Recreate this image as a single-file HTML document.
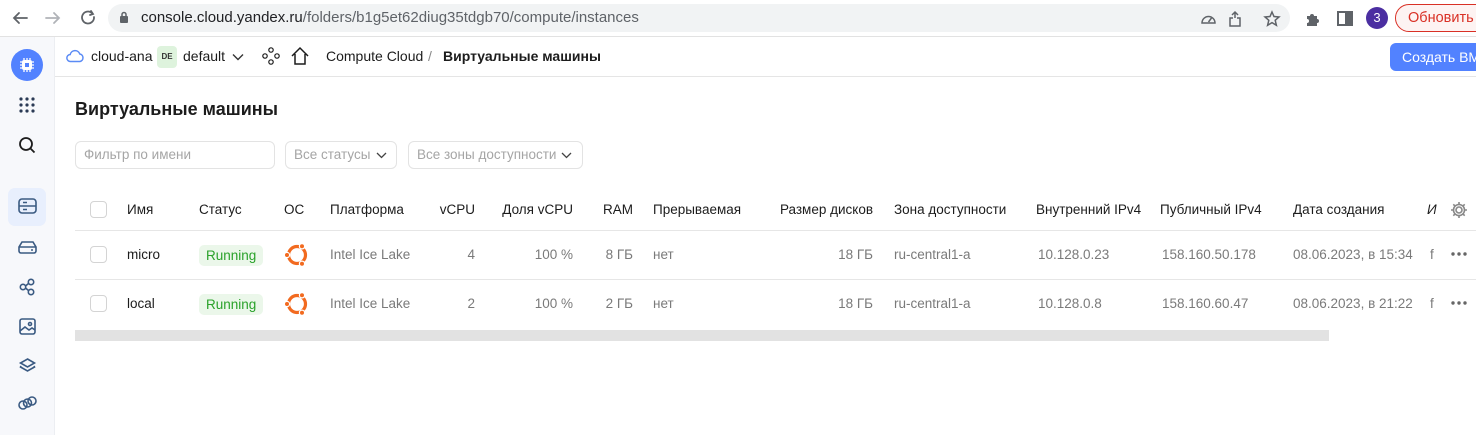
<!DOCTYPE html>
<html><head><meta charset="utf-8"><style>
*{box-sizing:border-box;margin:0;padding:0}
body{width:1476px;height:435px;overflow:hidden;background:#fff;font-family:"Liberation Sans","Noto Sans CJK SC",sans-serif;font-size:13.5px;color:#000;position:relative}
.a{position:absolute;white-space:nowrap}
.g{color:#7a7a7a}
.h{color:#1c1c1c;font-size:13.5px}
.r{text-align:right}
.cb{position:absolute;width:17px;height:17px;border:1px solid #d4d4d4;border-radius:4px;background:#fff}
.run{position:absolute;background:#ebf7ea;color:#2aa22a;border-radius:5px;padding:2px 7px;font-size:13.5px;height:21px;line-height:17px}
.sel{position:absolute;border:1px solid #e3e3e3;border-radius:6px;height:28px;color:#a5a5a5;line-height:26px;padding-left:8px;font-size:13.5px}
</style></head><body>
<div class="a" style="left:0;top:0;width:1476px;height:37px;background:#fff;border-bottom:1px solid #e2e2e2"></div>
<svg class="a" style="left:10px;top:9px" width="95" height="18" viewBox="0 0 95 18" fill="none" stroke-width="1.8" stroke-linecap="round">
<path d="M17 9H4M9 4L4 9l5 5" stroke="#5f6368"/><path d="M36 9h13M44 4l5 5-5 5" stroke="#b0b3b8"/>
<path d="M82 4a6 6 0 1 0 2 4" stroke="#5f6368"/><path d="M81 2l2 3-3 1" stroke="#5f6368"/></svg>
<div class="a" style="left:108px;top:4px;width:1182px;height:28px;border-radius:14px;background:#f1f3f4"></div>
<svg class="a" style="left:119px;top:11px" width="10" height="13"><rect x="1" y="5" width="8" height="7" rx="1" fill="#5f6368"/><path d="M3 5V3.5a2 2 0 0 1 4 0V5" stroke="#5f6368" fill="none" stroke-width="1.5"/></svg>
<div class="a" style="left:141px;top:9px;font-size:15px;color:#202124">console.cloud.yandex.ru<span style="color:#5f6368">/folders/b1g5et62diug35tdgb70/compute/instances</span></div>
<svg class="a" style="left:1200px;top:10px" width="85" height="17" fill="none" stroke="#5f6368" stroke-width="1.5">
<path d="M2 13a6.5 6.5 0 1 1 13 0z"/><path d="M8.5 12l3-4"/>
<path d="M35 8v-6M32 5l3-3 3 3M33 8h-3v8h10V8h-3"/>
<path d="M72 2l2 4.5 5 .5-3.8 3.3 1.2 5-4.4-2.7-4.4 2.7 1.2-5L65 7l5-.5z"/></svg>
<svg class="a" style="left:1305px;top:10px" width="60" height="17"><path d="M2 6h3a2 2 0 0 1 4 0h3v3a2 2 0 0 1 0 4v3H2v-3a2 2 0 0 0 0-4z" fill="#5f6368"/><rect x="33" y="2" width="14" height="13" fill="none" stroke="#5f6368" stroke-width="2"/><rect x="40" y="2" width="7" height="13" fill="#5f6368"/></svg>
<div class="a" style="left:1366px;top:7px;width:22px;height:22px;border-radius:11px;background:#4b2ea1;color:#fff;font-size:13px;text-align:center;line-height:22px">3</div>
<div class="a" style="left:1395px;top:4px;width:100px;height:28px;border:1px solid #d93025;border-radius:14px;background:#fdf3f2;color:#d93025;font-size:14.5px;line-height:26px;padding-left:12px">Обновить</div>
<div class="a" style="left:0;top:37px;width:55px;height:398px;background:#f7f8fb;border-right:1px solid #eceef2"></div>
<div class="a" style="left:11px;top:49px;width:32px;height:32px;border-radius:16px;background:#5282ff"></div>
<svg class="a" style="left:19px;top:57px" width="16" height="16"><rect x="3" y="3" width="10" height="10" rx="2" fill="#fff"/><rect x="6" y="6" width="4" height="4" fill="#5282ff"/><path d="M5 1v2M8 1v2M11 1v2M5 13v2M8 13v2M11 13v2M1 5h2M1 8h2M1 11h2M13 5h2M13 8h2M13 11h2" stroke="#fff" stroke-width="1.3"/></svg>
<svg class="a" style="left:19px;top:97px" width="16" height="16" fill="#2b3a55"><circle cx="2" cy="2" r="1.6"/><circle cx="8" cy="2" r="1.6"/><circle cx="14" cy="2" r="1.6"/><circle cx="2" cy="8" r="1.6"/><circle cx="8" cy="8" r="1.6"/><circle cx="14" cy="8" r="1.6"/><circle cx="2" cy="14" r="1.6"/><circle cx="8" cy="14" r="1.6"/><circle cx="14" cy="14" r="1.6"/></svg>
<svg class="a" style="left:18px;top:136px" width="18" height="18" fill="none" stroke="#1c1c1c" stroke-width="1.8"><circle cx="8" cy="8" r="6"/><path d="M12.5 12.5l4 4"/></svg>
<div class="a" style="left:8px;top:188px;width:38px;height:38px;border-radius:7px;background:#e8effd"></div>
<svg class="a" style="left:0;top:196px" width="55" height="230" fill="none" stroke="#3a5a82" stroke-width="1.6">
<rect x="19" y="3" width="17" height="14" rx="3"/><path d="M19 10h17M23 6.5h4M23 13.5h4"/>
<path d="M19 55v-4l3-5h11l3 5v4a2 2 0 0 1-2 2H21a2 2 0 0 1-2-2zM19 51h17M31 54h2"/>
<circle cx="23" cy="91" r="2.7"/><circle cx="31" cy="86" r="2.7"/><circle cx="31" cy="96" r="2.7"/><path d="M25.5 90l3-2.5M25.5 92l3 2.5"/>
<rect x="20" y="123" width="15" height="15" rx="2"/><circle cx="30" cy="128" r="1.5"/><path d="M20 135l5-4 4 3 3-2 3 2"/>
<path d="M27.5 163l7 4-7 4-7-4z"/><path d="M21 170l-0.5 1 7 4 7-4-0.5-1"/>
<path d="M23 205a4 4 0 1 0 0 8a4 4 0 1 0 0-8zM27.5 203a4 4 0 1 0 0 8a4 4 0 1 0 0-8zM32 201a4 4 0 1 0 0 8a4 4 0 1 0 0-8z"/></svg>
<div class="a" style="left:55px;top:76px;width:1421px;height:1px;background:#e5e5e5"></div>
<svg class="a" style="left:66px;top:49px" width="18" height="14" fill="none" stroke="#5b8bf5" stroke-width="1.5"><path d="M4.5 12.5a3.5 3.5 0 0 1-.3-7A5 5 0 0 1 13.8 5a3.8 3.8 0 0 1 0 7.5z"/></svg>
<div class="a" style="left:91px;top:48px;font-size:14px;color:#1c1c1c">cloud-ana</div>
<div class="a" style="left:157px;top:46px;width:20px;height:22px;border-radius:4px;background:#def3dd;font-size:8px;text-align:center;line-height:22px;color:#333;font-weight:bold">DE</div>
<div class="a" style="left:183px;top:48px;font-size:14px;color:#1c1c1c">default</div>
<svg class="a" style="left:232px;top:53px" width="12" height="8" fill="none" stroke="#333" stroke-width="1.4"><path d="M1 1.5l5 5 5-5"/></svg>
<svg class="a" style="left:262px;top:47px" width="18" height="18" fill="none" stroke="#1c1c1c" stroke-width="1.2"><circle cx="9" cy="3" r="2.2"/><circle cx="3" cy="9" r="2.2"/><circle cx="15" cy="9" r="2.2"/><circle cx="9" cy="15" r="2.2"/></svg>
<svg class="a" style="left:290px;top:46px" width="20" height="20" fill="none" stroke="#1c1c1c" stroke-width="1.5"><path d="M2 10L10 2l8 8M5 8v10h10V8"/></svg>
<div class="a" style="left:326px;top:48px;font-size:14px;color:#1c1c1c">Compute Cloud</div>
<div class="a" style="left:428px;top:48px;font-size:14px;color:#888">/</div>
<div class="a" style="left:443px;top:48px;font-size:14px;color:#1c1c1c;font-weight:bold">Виртуальные машины</div>
<div class="a" style="left:1390px;top:43px;width:100px;height:28px;border-radius:6px;background:#5282ff;color:#fff;font-size:14px;line-height:28px;padding-left:12px">Создать ВМ</div>
<div class="a" style="left:75px;top:99px;font-size:18px;font-weight:bold;color:#1c1c1c">Виртуальные машины</div>
<div class="sel" style="left:75px;top:141px;width:200px">Фильтр по имени</div>
<div class="sel" style="left:285px;top:141px;width:112px">Все статусы</div>
<div class="sel" style="left:408px;top:141px;width:175px">Все зоны доступности</div>
<svg class="a" style="left:376px;top:152px" width="11" height="7" fill="none" stroke="#444" stroke-width="1.3"><path d="M1 1l4.5 4.5L10 1"/></svg>
<svg class="a" style="left:561px;top:152px" width="11" height="7" fill="none" stroke="#444" stroke-width="1.3"><path d="M1 1l4.5 4.5L10 1"/></svg>
<div class="a" style="left:75px;top:230px;width:1401px;height:1px;background:#e6e6e6"></div>
<div class="a" style="left:75px;top:279px;width:1401px;height:1px;background:#e6e6e6"></div>
<div class="a" style="left:75px;top:330px;width:1254px;height:11px;background:#e2e2e2"></div>
<div class="cb" style="left:90px;top:201px"></div>
<div class="cb" style="left:90px;top:246px"></div>
<div class="cb" style="left:90px;top:295px"></div>
<div class="a h" style="top:202px;left:127px">Имя</div>
<div class="a h" style="top:202px;left:199px">Статус</div>
<div class="a h" style="top:202px;left:284px">ОС</div>
<div class="a h" style="top:202px;left:330px">Платформа</div>
<div class="a h r" style="top:202px;left:415px;width:60px">vCPU</div>
<div class="a h r" style="top:202px;left:473px;width:100px">Доля vCPU</div>
<div class="a h r" style="top:202px;left:573px;width:60px">RAM</div>
<div class="a h" style="top:202px;left:653px">Прерываемая</div>
<div class="a h r" style="top:202px;left:753px;width:120px">Размер дисков</div>
<div class="a h" style="top:202px;left:894px">Зона доступности</div>
<div class="a h" style="top:202px;left:1036px">Внутренний IPv4</div>
<div class="a h" style="top:202px;left:1160px">Публичный IPv4</div>
<div class="a h" style="top:202px;left:1293px">Дата создания</div>
<div class="a h" style="top:202px;left:1427px;font-style:italic">И</div>
<svg class="a" style="left:1450px;top:201px" width="18" height="18" fill="none" stroke="#888" stroke-width="1.6"><circle cx="9" cy="9" r="3"/><path d="M9 1v3M9 14v3M1 9h3M14 9h3M3.3 3.3l2.1 2.1M12.6 12.6l2.1 2.1M3.3 14.7l2.1-2.1M12.6 5.4l2.1-2.1"/><circle cx="9" cy="9" r="5.5"/></svg>

<div class="a" style="top:247px;left:127px;color:#1c1c1c">micro</div>
<div class="run" style="left:199px;top:245px">Running</div>
<div class="a g" style="top:247px;left:330px">Intel Ice Lake</div>
<div class="a g r" style="top:247px;left:415px;width:60px">4</div>
<div class="a g r" style="top:247px;left:473px;width:100px">100 %</div>
<div class="a g r" style="top:247px;left:573px;width:60px">8 ГБ</div>
<div class="a g" style="top:247px;left:653px">нет</div>
<div class="a g r" style="top:247px;left:753px;width:120px">18 ГБ</div>
<div class="a g" style="top:247px;left:894px">ru-central1-a</div>
<div class="a g" style="top:247px;left:1038px">10.128.0.23</div>
<div class="a g" style="top:247px;left:1162px">158.160.50.178</div>
<div class="a g" style="top:247px;left:1293px">08.06.2023, в 15:34</div>
<div class="a g" style="top:247px;left:1430px">f</div>
<svg class="a" style="left:1451px;top:252px" width="16" height="4" fill="#666"><circle cx="2" cy="2" r="1.7"/><circle cx="8" cy="2" r="1.7"/><circle cx="14" cy="2" r="1.7"/></svg>

<div class="a" style="top:296px;left:127px;color:#1c1c1c">local</div>
<div class="run" style="left:199px;top:294px">Running</div>
<div class="a g" style="top:296px;left:330px">Intel Ice Lake</div>
<div class="a g r" style="top:296px;left:415px;width:60px">2</div>
<div class="a g r" style="top:296px;left:473px;width:100px">100 %</div>
<div class="a g r" style="top:296px;left:573px;width:60px">2 ГБ</div>
<div class="a g" style="top:296px;left:653px">нет</div>
<div class="a g r" style="top:296px;left:753px;width:120px">18 ГБ</div>
<div class="a g" style="top:296px;left:894px">ru-central1-a</div>
<div class="a g" style="top:296px;left:1038px">10.128.0.8</div>
<div class="a g" style="top:296px;left:1162px">158.160.60.47</div>
<div class="a g" style="top:296px;left:1293px">08.06.2023, в 21:22</div>
<div class="a g" style="top:296px;left:1430px">f</div>
<svg class="a" style="left:1451px;top:301px" width="16" height="4" fill="#666"><circle cx="2" cy="2" r="1.7"/><circle cx="8" cy="2" r="1.7"/><circle cx="14" cy="2" r="1.7"/></svg>

<svg class="a" style="left:283px;top:241px" width="28" height="28"><circle cx="14" cy="14" r="8.5" fill="none" stroke="#f26a1f" stroke-width="3.2"/><circle cx="4" cy="14" r="2.6" fill="#f26a1f" stroke="#fff" stroke-width="1.2"/><circle cx="19" cy="5.3" r="2.6" fill="#f26a1f" stroke="#fff" stroke-width="1.2"/><circle cx="19" cy="22.7" r="2.6" fill="#f26a1f" stroke="#fff" stroke-width="1.2"/></svg>
<svg class="a" style="left:283px;top:290px" width="28" height="28"><circle cx="14" cy="14" r="8.5" fill="none" stroke="#f26a1f" stroke-width="3.2"/><circle cx="4" cy="14" r="2.6" fill="#f26a1f" stroke="#fff" stroke-width="1.2"/><circle cx="19" cy="5.3" r="2.6" fill="#f26a1f" stroke="#fff" stroke-width="1.2"/><circle cx="19" cy="22.7" r="2.6" fill="#f26a1f" stroke="#fff" stroke-width="1.2"/></svg>
</body></html>
